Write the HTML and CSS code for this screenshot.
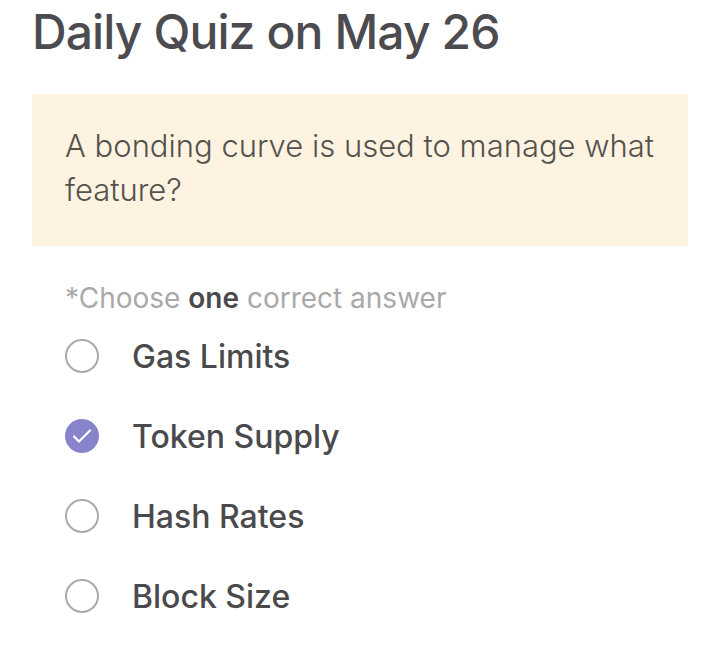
FILE: index.html
```html
<!DOCTYPE html>
<html lang="en">
<head>
  <meta charset="UTF-8">
  <title>Daily Quiz</title>
  <meta name="viewport" content="width=device-width, initial-scale=1.0">
  <link rel="stylesheet" href="styles.css">
</head>
<body>
  <div class="quiz">
    <h1 class="quiz-title">Daily Quiz on May 26</h1>

    <div class="question-box">
      <p>A bonding curve is used to manage what feature?</p>
    </div>

    <div class="hint">*Choose <strong>one</strong> correct answer</div>

    <ul class="options">
      <li class="option">
        <span class="radio"></span>
        <span class="label">Gas Limits</span>
      </li>
      <li class="option checked">
        <span class="radio">
          <svg class="check" width="22" height="22" viewBox="0 0 22 22"><path d="M3 11.5l5 5L19 5.5" fill="none" stroke="#ffffff" stroke-width="2.2" stroke-linecap="round" stroke-linejoin="round"/></svg>
        </span>
        <span class="label">Token Supply</span>
      </li>
      <li class="option">
        <span class="radio"></span>
        <span class="label">Hash Rates</span>
      </li>
      <li class="option">
        <span class="radio"></span>
        <span class="label">Block Size</span>
      </li>
    </ul>
  </div>
</body>
</html>
```

FILE: styles.css
```css
* {
  box-sizing: border-box;
}

body {
  margin: 0;
  font-family: Inter, "Noto Sans", Arial, sans-serif;
  background: #fff;
  color: #4a4a4d;
}

.quiz {
  padding: 0 32px;
}

.quiz-title {
  margin: 0;
  padding-top: 4px;
  font-size: 48px;
  font-weight: 500;
  line-height: 56px;
  color: #4b4b50;
  letter-spacing: -0.9px;
}

.question-box {
  margin-top: 34px;
  background: #fef3e1;
  padding: 30px 33px 28px;
  height: 152px;
}

.question-box p {
  margin: 0;
  font-size: 31px;
  font-weight: 300;
  line-height: 44px;
  color: #55524e;
}

.hint {
  margin-top: 36px;
  padding-left: 33px;
  font-size: 28px;
  line-height: 32px;
  color: #a9a9a9;
}

.hint strong {
  font-weight: 600;
  color: #4a4a4d;
}

.options {
  list-style: none;
  margin: 2px 0 0;
  padding: 0;
}

.option {
  display: flex;
  align-items: center;
  height: 80px;
  padding-left: 33px;
}

.radio {
  width: 34px;
  height: 34px;
  border-radius: 50%;
  border: 2px solid #aaa;
  display: flex;
  align-items: center;
  justify-content: center;
  flex-shrink: 0;
}

.option.checked .radio {
  border: none;
  background: #8884cc;
}

.check {
  flex: none;
  display: block;
}

.label {
  margin-left: 33px;
  font-size: 32px;
  font-weight: 500;
  color: #4a4a4d;
}
```
